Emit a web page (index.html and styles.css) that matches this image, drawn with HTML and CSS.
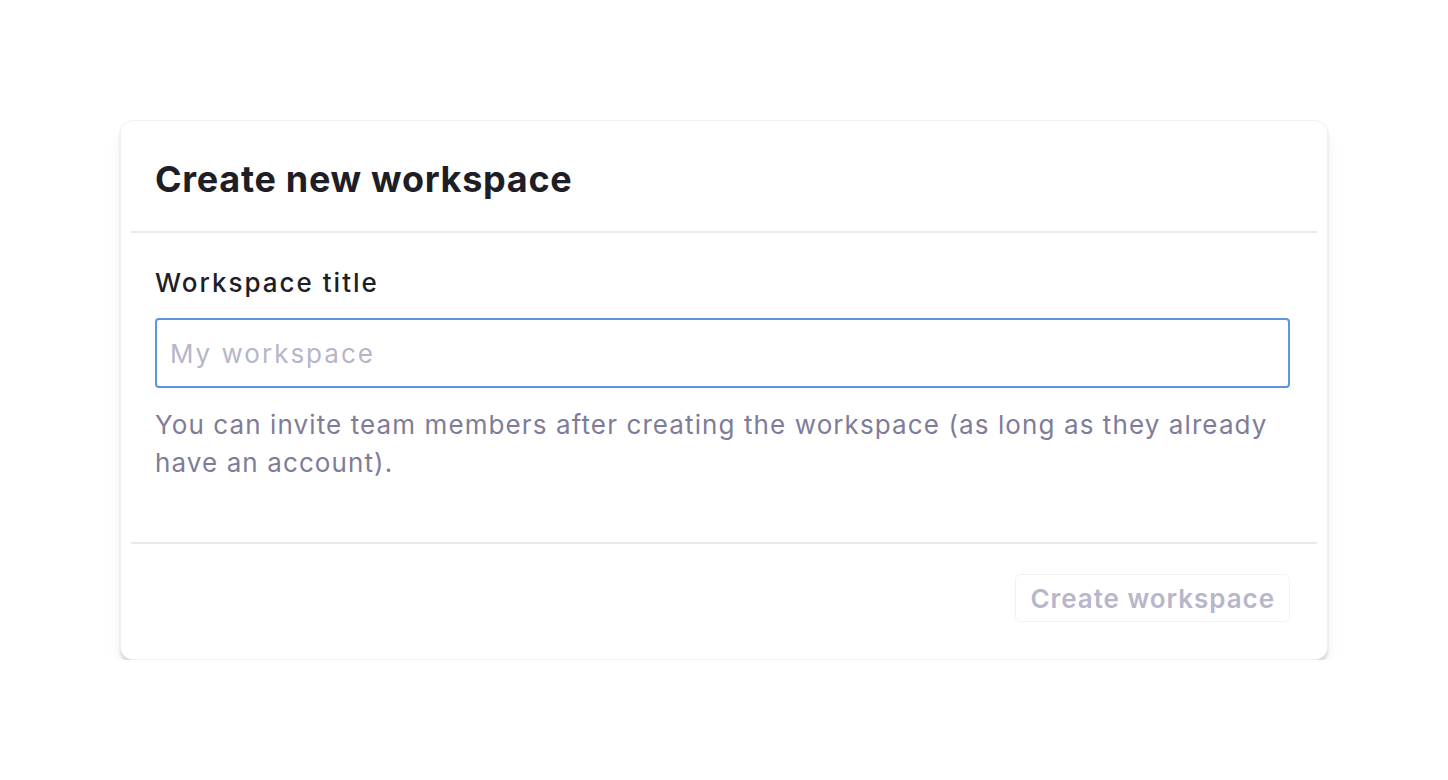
FILE: index.html
```html
<!DOCTYPE html>
<html lang="en">
<head>
<meta charset="utf-8">
<title>Create new workspace</title>
<link rel="stylesheet" href="styles.css">
</head>
<body>
<div class="card">
  <div class="card-header">
    <h1 class="title">Create new workspace</h1>
  </div>
  <div class="card-body">
    <label class="label" for="ws">Workspace title</label>
    <input class="input" id="ws" type="text" placeholder="My workspace">
    <p class="help">You can invite team members after creating the workspace (as long as they already have an account).</p>
  </div>
  <div class="card-footer">
    <button class="btn" disabled>Create workspace</button>
  </div>
</div>
</body>
</html>
```
FILE: styles.css
```css
html, body { margin: 0; padding: 0; background: #ffffff; }
body {
  font-family: Inter, "Noto Sans", sans-serif;
  padding: 120px 120px 0 120px;
}
.card {
  width: 1208px;
  box-sizing: border-box;
  background: #fff;
  border: 1px solid #f2f2f5;
  border-radius: 13px;
  box-shadow: 0 3px 3px rgba(0,0,0,0.13), 0 10px 16px rgba(0,0,0,0.05);
}
.card-header {
  margin: 0 10px;
  padding: 36px 24px 30px;
  border-bottom: 2px solid #e9e9ee;
}
.title {
  margin: 0;
  font-size: 36px;
  line-height: 44px;
  font-weight: 700;
  letter-spacing: 0.7px;
  color: #1e1e26;
}
.card-body {
  margin: 0 10px;
  padding: 32px 27px 60px 24px;
  border-bottom: 2px solid #e9e9ee;
  display: flex;
  flex-direction: column;
}
.label {
  font-size: 26px;
  line-height: 36px;
  font-weight: 500;
  letter-spacing: 2px;
  color: #1e1e26;
  margin-bottom: 17px;
}
.input {
  box-sizing: border-box;
  height: 70px;
  width: 100%;
  border: 2px solid #5d94e0;
  border-radius: 4px;
  padding: 0 13px;
  font-family: inherit;
  font-size: 26px;
  letter-spacing: 2px;
  color: #1e1e26;
  outline: none;
}
.input::placeholder { color: #b7b6c8; }
.help {
  margin: 18px 0 0;
  font-size: 26px;
  line-height: 38px;
  letter-spacing: 1.1px;
  color: #7f7c99;
}
.card-footer {
  display: flex;
  justify-content: flex-end;
  padding: 30px 37px 37px;
}
.btn {
  font-family: inherit;
  font-size: 26px;
  font-weight: 600;
  letter-spacing: 0.95px;
  color: #b8b6ca;
  background: #fff;
  border: 1px dotted #e6e6ec;
  border-radius: 6px;
  height: 48px;
  padding: 0 14px;
}
```
